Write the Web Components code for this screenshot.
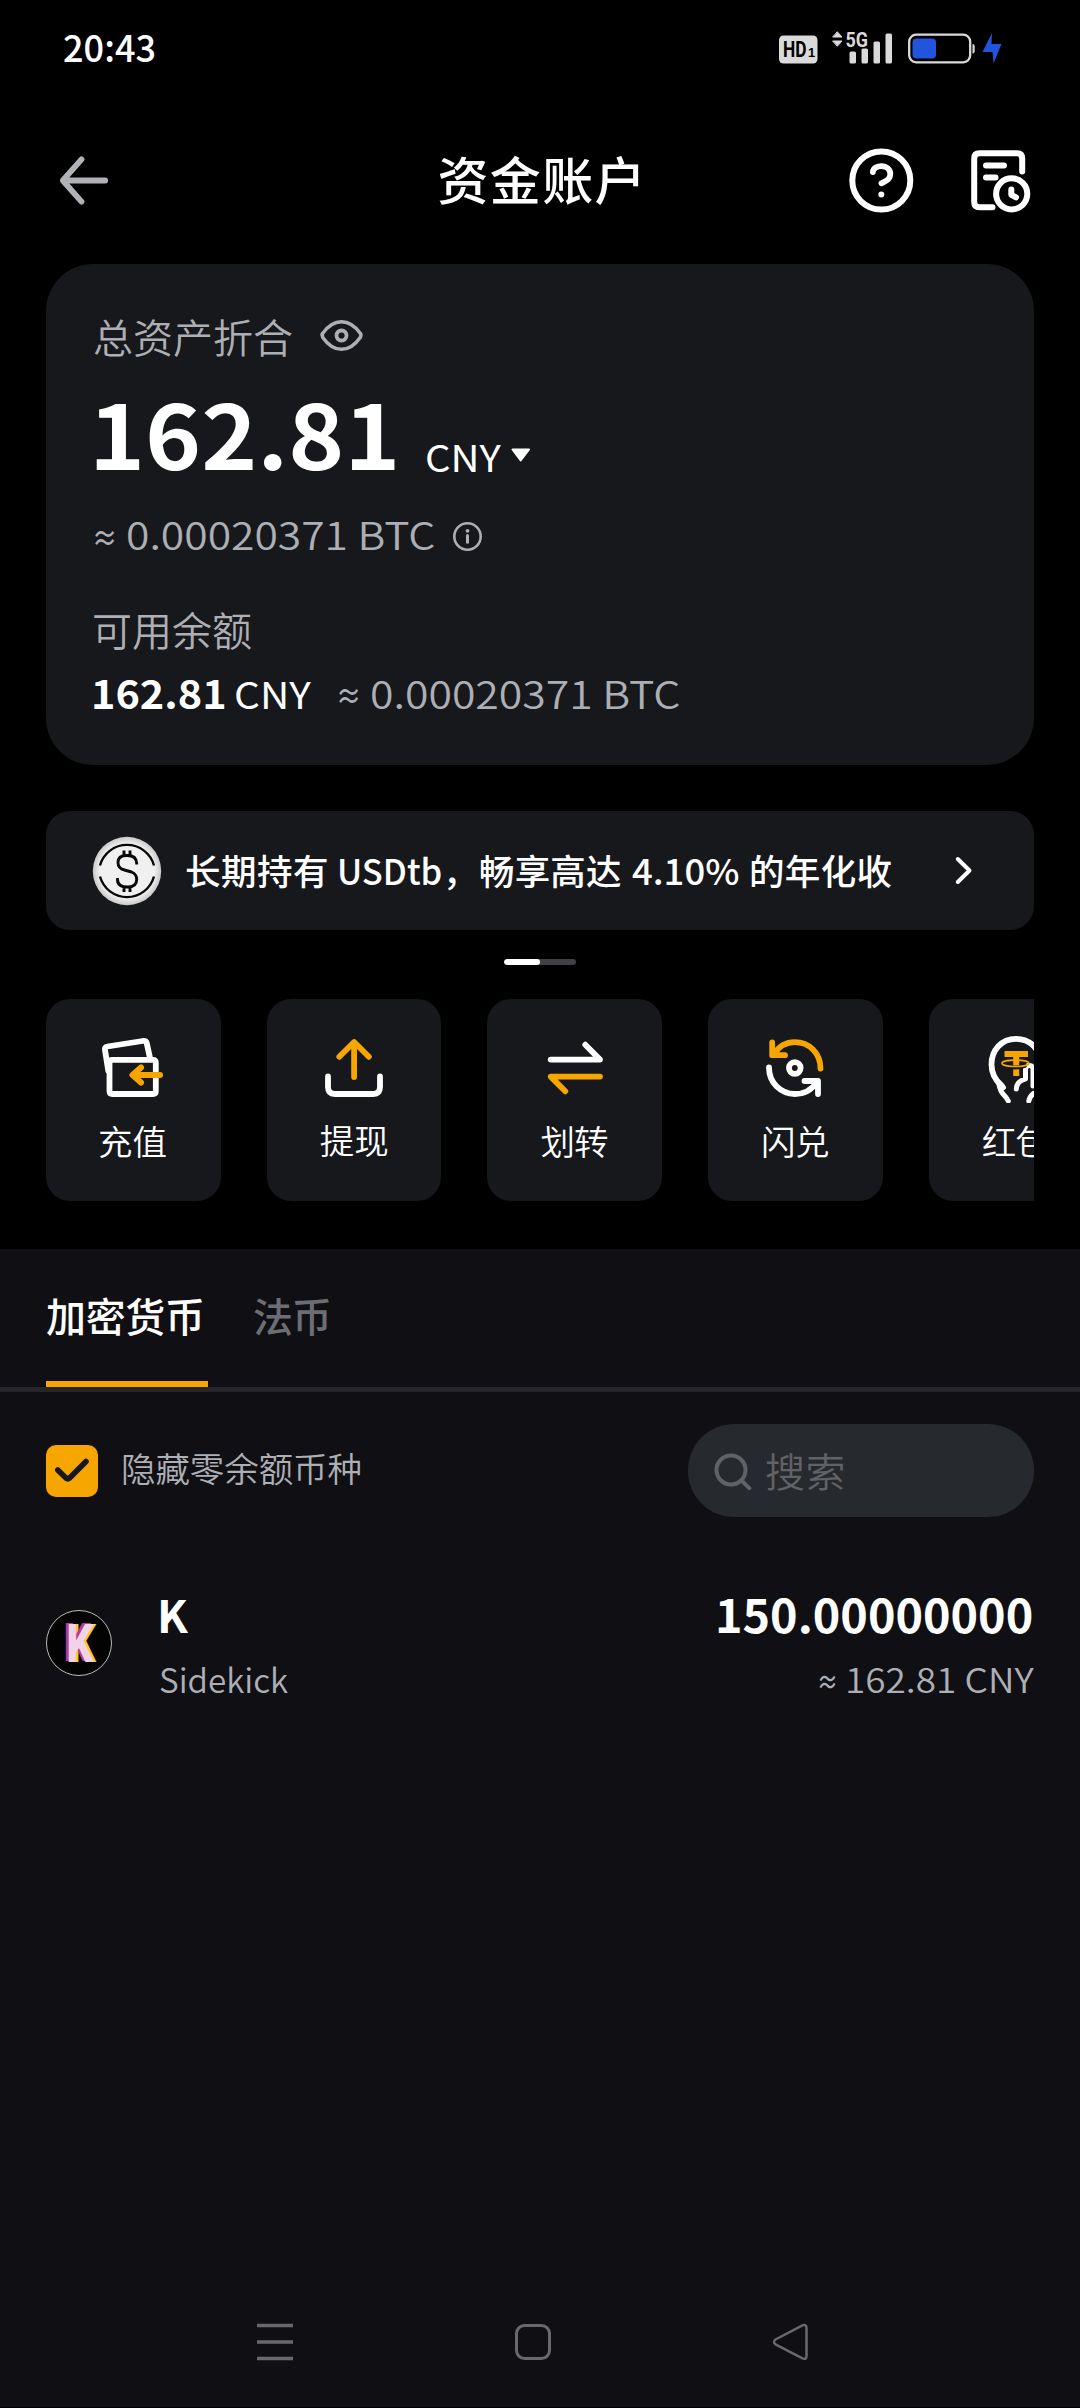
<!DOCTYPE html>
<html lang="zh-CN">
<head>
<meta charset="utf-8">
<title>资金账户</title>
<style>
html,body{margin:0;padding:0;background:#000}
body{width:1080px;height:2408px;overflow:hidden;font-family:"Noto Sans CJK SC","Noto Sans",sans-serif;color:#fff}
</style>
</head>
<body>
<funding-app></funding-app>
<script>
const FAMILY = '"Noto Sans CJK SC","Noto Sans",sans-serif';
const ctx = document.createElement('canvas').getContext('2d');

// Text trimmed to its ink box: w = ink width, s = font size, wt = weight, stretch = widen glyphs instead of tracking
class FitText extends HTMLElement {
  connectedCallback() {
    const text = this.getAttribute('text'), s = +this.getAttribute('s'), w = +this.getAttribute('w');
    const wt = this.getAttribute('wt') || 400;
    ctx.font = `${wt} ${s}px ${FAMILY}`;
    const m = ctx.measureText(text);
    const ink = m.actualBoundingBoxLeft + m.actualBoundingBoxRight;
    const up = m.actualBoundingBoxAscent, h = up + m.actualBoundingBoxDescent;
    const base = (s - m.fontBoundingBoxAscent - m.fontBoundingBoxDescent) / 2 + m.fontBoundingBoxAscent;
    const stretch = this.hasAttribute('stretch');
    const k = stretch ? w / ink : 1;
    const ls = stretch || text.length < 2 ? 0 : (w - ink) / (text.length - 1);
    this.attachShadow({ mode: 'open' }).innerHTML = `<style>
      :host{display:block;flex:none;width:${w}px;height:${h}px}
      span{display:block;width:max-content;white-space:pre;font:${wt} ${s}px/${s}px ${FAMILY};letter-spacing:${ls}px;
        margin-top:${up - base}px;margin-left:${m.actualBoundingBoxLeft * k}px;transform:scaleX(${k});transform-origin:0 50%}
      :host{display:flow-root}
    </style><span></span>`;
    this.shadowRoot.querySelector('span').textContent = text;
  }
}
customElements.define('fit-text', FitText);

const define = (name, html) => customElements.define(name, class extends HTMLElement {
  constructor() { super(); this.attachShadow({ mode: 'open' }).innerHTML = html; }
});
const svgBase = 'svg{display:block;flex:none;fill:none;stroke-linecap:round;stroke-linejoin:round}';

define('status-bar', `<style>:host{display:flex;height:97px;padding:0 76px 0 64px;justify-content:space-between;align-items:center}${svgBase}</style>
<fit-text text="20:43" s="37" wt="500" w="91" stretch></fit-text>
<svg width="226" height="40" viewBox="778 28.5 226 40">
<rect x="779" y="35" width="38.5" height="28" rx="4.5" fill="#dadada"/>
<text x="783" y="56.5" font-family="Liberation Sans Narrow,Roboto" font-weight="700" font-size="22" textLength="23.5" lengthAdjust="spacingAndGlyphs" fill="#000">HD</text>
<text x="808" y="56.5" font-family="Liberation Sans" font-weight="700" font-size="13" fill="#000">1</text>
<path d="M837.5 31.500L842 36.500H833ZM833 40.500H842L837.500 45.500Z" fill="#dadada" stroke="#dadada" stroke-width="1"/>
<text x="845.500" y="46.500" font-family="Liberation Sans Narrow,Roboto" font-weight="700" font-size="20.500" textLength="22.500" lengthAdjust="spacingAndGlyphs" fill="#dadada">5G</text>
<g fill="#dadada"><rect x="849.500" y="51" width="6.500" height="12" rx="1.500"/><rect x="861.500" y="48" width="6.500" height="15" rx="1.500"/><rect x="873.500" y="41" width="6.500" height="22" rx="1.500"/><rect x="885.500" y="33" width="6.500" height="30" rx="1.500"/></g>
<rect x="909.200" y="34.200" width="61" height="27.600" rx="7" stroke="#dadada" stroke-width="2.300"/>
<rect x="912.500" y="38" width="23.500" height="20" rx="4" fill="#2254dc"/>
<path d="M972.500 43.500q2.200 0 2.200 2.200v5q0 2.200-2.200 2.200z" fill="#dadada"/>
<path d="M992 32.500L982.500 51.500H992.500L993.500 63L1001.500 43.500H991.500Z" fill="#2254dc"/>
</svg>`);

define('title-bar', `<style>:host{display:grid;grid-template-columns:1fr auto 1fr;align-items:center;height:167px;padding:0 49px 0 58px}
.r{display:flex;justify-content:flex-end;gap:54px}${svgBase}svg{stroke:#fff;stroke-width:6}</style>
<svg width="52" height="52" viewBox="58 154.500 52 52" style="stroke:#b0b2b6;stroke-width:5.800"><path d="M81.500 158.800L62.800 180L81.500 201.200M63.500 180H105.200"/></svg>
<fit-text text="资金账户" s="51" wt="500" w="199" style="margin:0 0 0 -11px"></fit-text>
<div class="r">
<svg width="66" height="66" viewBox="848 147.500 66 66"><circle cx="881.300" cy="180" r="29"/><path d="M872.800 171.500C873.500 163.500 890.300 163 890.300 173.500C890.300 179.500 885.500 180.500 881.500 182.800" stroke-width="5.800"/><circle cx="881.300" cy="194" r="3" fill="#fff" stroke="none"/></svg>
<svg width="63" height="66" viewBox="968 147.500 63 66"><path d="M1022.200 171V158Q1022.200 152.800 1017 152.800H979.500Q974.200 152.800 974.200 158V201.500Q974.200 206.800 979.500 206.800H992.500M986 165H1004M986 177H995.500"/><circle cx="1011.700" cy="193.300" r="15.600"/><path d="M1011.300 189V194.300L1016 196.800"/></svg>
</div>`);

define('asset-card', `<style>:host{display:flex;flex-direction:column;box-sizing:border-box;width:988px;height:501px;padding:55px 0 0 48px;border-radius:47px;background:#17181c}
.row{display:flex}.g{color:#adafb4}${svgBase}</style>
<div class="row g" style="height:38px"><fit-text text="总资产折合" s="40" wt="350" w="198"></fit-text>
<svg style="margin:-2px 0 0 27px" width="46" height="38" viewBox="319 317 46 38" stroke="#adafb4"><path d="M322.600 336Q321.500 334.800 322.600 333.400Q331 321.700 341.500 321.700T360.400 333.400Q361.500 334.800 360.400 337.200Q352 349.300 341.500 349.300T322.600 337.200Q321.500 335.500 322.600 333.400" stroke-width="3.500"/><circle cx="341.500" cy="335.500" r="5" stroke-width="3.800"/></svg></div>
<div class="row" style="height:69px;margin-top:46px;align-items:flex-end">
<fit-text style="margin:0 0 1.500px 2px" text="162.81" s="89" wt="700" w="298" stretch></fit-text>
<fit-text style="margin-left:33px" text="CNY" s="37" w="74" stretch></fit-text>
<svg style="margin:0 0 9px 9px" width="21" height="16" viewBox="510 447 21 16" stroke="#fff" stroke-width="2"><path d="M512.500 449.500H529L520.700 460.500Z" fill="#fff"/></svg></div>
<div class="row g" style="height:29px;margin-top:50px;align-items:center">
<fit-text text="≈" s="32" wt="500" w="19" stretch style="margin:3px 13px 0 1px"></fit-text>
<fit-text text="0.00020371 BTC" s="38" wt="350" w="307" stretch></fit-text>
<svg style="margin-left:18px" width="31" height="31" viewBox="453 521 31 31" stroke="#adafb4" stroke-width="2.600"><circle cx="468.500" cy="536.500" r="13.200"/><path d="M468.500 535.500V542.300" stroke-width="3"/><circle cx="468.500" cy="530.800" r="1.900" fill="#adafb4" stroke="none"/></svg></div>
<div class="row g" style="height:39px;margin-top:60px"><fit-text text="可用余额" s="40" wt="350" w="157"></fit-text></div>
<div class="row" style="height:30px;margin-top:29px;align-items:flex-end">
<fit-text text="162.81" s="39.500" wt="700" w="130" stretch></fit-text>
<fit-text style="margin-left:12px" text="CNY" s="37" w="75" stretch></fit-text>
<fit-text class="g" text="≈" s="32" wt="500" w="19" stretch style="margin:0 13px 6px 28px"></fit-text>
<fit-text class="g" text="0.00020371 BTC" s="38" wt="350" w="308" stretch></fit-text></div>`);

define('promo-banner', `<style>:host{display:flex;box-sizing:border-box;align-items:center;width:988px;height:119px;margin-top:46px;padding:0 58px 0 46px;border-radius:24px;background:#17181c}${svgBase}
.t{display:flex;align-items:flex-end;flex:1;margin:2px 0 0 24px}</style>
<svg width="70" height="70" viewBox="91.500 835.500 70 70"><defs><radialGradient id="m"><stop offset=".8" stop-color="#f0f0f0"/><stop offset="1" stop-color="#c9c9c9"/></radialGradient></defs><circle cx="126.500" cy="870.500" r="34.200" fill="url(#m)"/>
<g stroke="#080808" stroke-linecap="butt"><path d="M99.500 865A28 28 0 0 1 153.500 865M99.500 876A28 28 0 0 0 153.500 876" stroke-width="2.400"/>
<path d="M136.200 864V863Q136 855 127 855H126Q117.500 855 117.500 862Q117.500 868 124 869.500L131 871.500Q136.200 873.500 136.200 879Q136.200 886.500 127 886.500Q117 886.500 117 879V877.500M123.500 850V855M129.500 850V855M123.500 886.500V891.500M129.500 886.500V891.500" stroke-width="2.900"/></g></svg>
<div class="t"><fit-text text="长期持有" s="35.500" wt="500" w="141"></fit-text><fit-text style="margin:0 0 3.500px 13px" text="USDtb" s="35.500" wt="500" w="101" stretch></fit-text><fit-text style="margin:0 0 -2px 7px" text="，" s="35" wt="500" w="7"></fit-text><fit-text style="margin-left:25px" text="畅享高达" s="35.500" wt="500" w="141"></fit-text><fit-text style="margin:0 0 3.500px 11px" text="4.10%" s="35.500" wt="500" w="107" stretch></fit-text><fit-text style="margin-left:12px" text="的年化收" s="35.500" wt="500" w="140.500"></fit-text></div>
<svg width="24" height="36" viewBox="952 852.500 24 36" stroke="#fff" stroke-width="4"><path d="M957.800 858.500L969.500 870L957.800 881.500"/></svg>`);

define('page-dots', `<style>:host{display:flex;width:72px;height:6px;margin:29px 0 0 458px;border-radius:3px;background:#404146;overflow:hidden}i{width:36px;border-radius:3px;background:#fff}</style><i></i>`);

define('action-tile', `<style>:host{display:flex;flex:none;flex-direction:column;align-items:center;box-sizing:border-box;width:174.700px;height:202px;padding-top:34px;border-radius:24px;background:#17181c}
::slotted(svg){display:block;fill:none;stroke:#fff;stroke-width:5.800;stroke-linecap:round;stroke-linejoin:round}::slotted(fit-text){margin-top:22px}</style><slot></slot>`);

define('action-row', `<style>:host{display:flex;gap:46px;width:988px;margin-top:34px;overflow:hidden}.o{stroke:#f7a600}</style>
<action-tile><svg width="70" height="70" viewBox="98.500 1033 70 70"><path d="M108.800 1071L105.500 1050Q105 1047 108 1046.500L143 1041Q146.500 1040.500 147.200 1043L150.300 1057M113 1059.800H153.300Q156.300 1059.800 156.300 1062.800V1091Q156.300 1094 153.300 1094H113Q110 1094 110 1091V1062.800Q110 1059.800 113 1059.800"/><path class="o" stroke-width="6" d="M160.500 1075H134M141.500 1067.500L133 1075L141.500 1082.500"/></svg><fit-text text="充值" s="34.500" wt="350" w="66.500"></fit-text></action-tile>
<action-tile><svg width="70" height="70" viewBox="319.200 1033 70 70"><path d="M328.200 1076.500V1087Q328.200 1094 335 1094H373.500Q380.200 1094 380.200 1087V1076.500"/><path class="o" d="M354.300 1042.500V1077M339.500 1056.800L354.300 1042L369 1056.800"/></svg><fit-text text="提现" s="34.500" wt="350" w="66.500"></fit-text></action-tile>
<action-tile><svg width="70" height="70" viewBox="540.500 1033 70 70"><path d="M551.200 1059.600H600.500L585.800 1044.700"/><path class="o" d="M600.500 1076.600H551.200L565.800 1091.300"/></svg><fit-text text="划转" s="34.500" wt="350" w="66.500"></fit-text></action-tile>
<action-tile><svg width="70" height="70" viewBox="760.500 1033 70 70"><path class="o" d="M821 1068.500C821 1053 809.500 1042.200 795.300 1042.200C786.500 1042.200 779 1047 774.500 1054.300M772.700 1042.300V1055.200H785.500"/><path d="M769.500 1067.500C769.500 1083 781.500 1094 795.300 1094C804.500 1094 812.500 1089.500 817.500 1082M805 1081H818.500V1094"/><circle cx="795.300" cy="1068" r="5.800"/></svg><fit-text text="闪兑" s="34.500" wt="350" w="65"></fit-text></action-tile>
<action-tile><svg width="70" height="70" viewBox="981 1033 70 70"><path d="M1001.500 1085.500C994 1079 991.500 1072 991.500 1064.500C991.500 1050 1001.500 1038.800 1016 1038.800S1040.500 1050 1040.500 1063" /><path d="M1003.500 1087.500L998.500 1082.500Q1000 1091 1003.500 1094.500Q1007 1098 1008.300 1101M1028.800 1101Q1029.500 1097 1033.500 1093.500M1016.300 1089Q1016.800 1083 1021.500 1080.500L1025.500 1079V1069Q1026 1065.500 1029.500 1065.500Q1032.500 1065.500 1033 1069V1086" stroke-width="5"/><path d="M1004.500 1051H1028V1057H1019.200V1076H1013.200V1057H1004.500Z" fill="#f7a600" stroke="none"/><path d="M1004 1065.800Q1015.500 1069 1025 1065.800" stroke="#17181c" stroke-width="4"/><ellipse class="o" cx="1015.500" cy="1063.300" rx="13.500" ry="3.200" stroke-width="1.600"/></svg><fit-text text="红包" s="34.500" wt="350" w="66.500"></fit-text></action-tile>`);

define('coin-tabs', `<style>:host{display:flex;box-sizing:border-box;height:143px;padding-left:46px;gap:45px;border-bottom:5px solid #25262b}
div{display:flex;flex-direction:column;justify-content:space-between;padding-top:48px;box-sizing:border-box;height:138px}i{height:6px;background:#f7a600}</style>
<div style="width:161.500px"><fit-text text="加密货币" s="40" wt="500" w="156"></fit-text><i></i></div>
<div style="color:#6d6e73"><fit-text style="margin-left:1.500px" text="法币" s="40" wt="500" w="75"></fit-text></div>`);

define('filter-bar', `<style>:host{display:flex;align-items:center;justify-content:space-between;height:93px;margin:32px 46px 0}.l{display:flex;align-items:center}
.s{display:flex;align-items:center;box-sizing:border-box;width:346px;height:93px;padding-left:25px;border-radius:46px;background:#26292d;color:#606266}${svgBase}</style>
<div class="l"><svg width="52" height="52" viewBox="46 1445 52 52"><rect x="46" y="1445" width="52" height="52" rx="10" fill="#f7a600"/><path d="M57.800 1470L66 1478Q67.800 1479.500 69.600 1478L86 1461.500" stroke="#17181c" stroke-width="5.600"/></svg>
<fit-text style="margin:-3px 0 0 25px;color:#adafb4" text="隐藏零余额币种" s="34.500" wt="350" w="237.500"></fit-text></div>
<div class="s"><svg width="40" height="40" viewBox="713 1452 40 40" stroke="#606266" stroke-width="4"><circle cx="731" cy="1471" r="14.500"/><path d="M741.500 1481.500L749.300 1489.200"/></svg>
<fit-text style="margin:2px 0 0 13px" text="搜索" s="40" wt="350" w="77.500"></fit-text></div>`);

define('coin-row', `<style>:host{display:flex;height:96px;margin:80px 46px 0}
.logo{display:flex;justify-content:center;align-items:center;box-sizing:border-box;width:66px;height:66px;margin-top:13px;border-radius:50%;border:1px solid #b9bdb5;background:#040303}
.logo b{font:900 53px/53px Roboto,sans-serif;color:#f2d3e6;transform:translate(1px,1px) scaleX(.8);text-shadow:-3.500px -1.500px #b33c91,3px 0 #f3cf27}
.n,.v{display:flex;flex-direction:column}.n{margin-left:49px;padding-top:3px}.v{margin-left:auto;padding-top:2px;align-items:flex-end}.g{color:#adafb4}.a{display:flex;align-items:center}</style>
<div class="logo"><b>K</b></div>
<div class="n"><fit-text text="K" s="45" wt="600" w="28" stretch></fit-text><fit-text class="g" style="margin:33px 0 0 -1.500px" text="Sidekick" s="33.500" wt="350" w="128" stretch></fit-text></div>
<div class="v"><fit-text style="margin-right:2px" text="150.00000000" s="46" wt="600" w="314" stretch></fit-text>
<div class="a g" style="margin-top:34px"><fit-text style="margin:2px 12px 0 0" text="≈" s="28" wt="500" w="16.500" stretch></fit-text><fit-text text="162.81 CNY" s="33.500" wt="350" w="186" stretch></fit-text></div></div>`);

define('nav-keys', `<style>:host{display:flex;justify-content:space-between;margin:auto 270px 45px 255px;height:40px}${svgBase}svg{stroke:#69696c;stroke-width:3}</style>
<svg width="40" height="40" viewBox="255 2322 40 40" style="stroke-linecap:butt;stroke-width:3.500"><path d="M257 2325.500H293M257 2342H293M257 2358.500H293"/></svg>
<svg width="40" height="40" viewBox="513 2322 40 40"><rect x="516.500" y="2325.500" width="33" height="33" rx="8"/></svg>
<svg width="40" height="40" viewBox="770 2322 40 40" style="stroke-width:2.500"><path d="M775.500 2339.500L801.500 2325.800Q806.500 2323.500 806.500 2328V2356Q806.500 2360.500 801.500 2357.800L775.500 2344.300Q772.500 2342 775.500 2339.500Z"/></svg>`);

define('funding-app', `<style>:host{display:flex;flex-direction:column;width:1080px;height:2408px;background:#000}
main{padding:0 46px}section{display:flex;flex-direction:column;margin-top:48px;height:1158px;background:#101014}</style>
<status-bar></status-bar><title-bar></title-bar>
<main><asset-card></asset-card><promo-banner></promo-banner><page-dots></page-dots><action-row></action-row></main>
<section><coin-tabs></coin-tabs><filter-bar></filter-bar><coin-row></coin-row><nav-keys></nav-keys></section>`);
</script>
</body>
</html>
